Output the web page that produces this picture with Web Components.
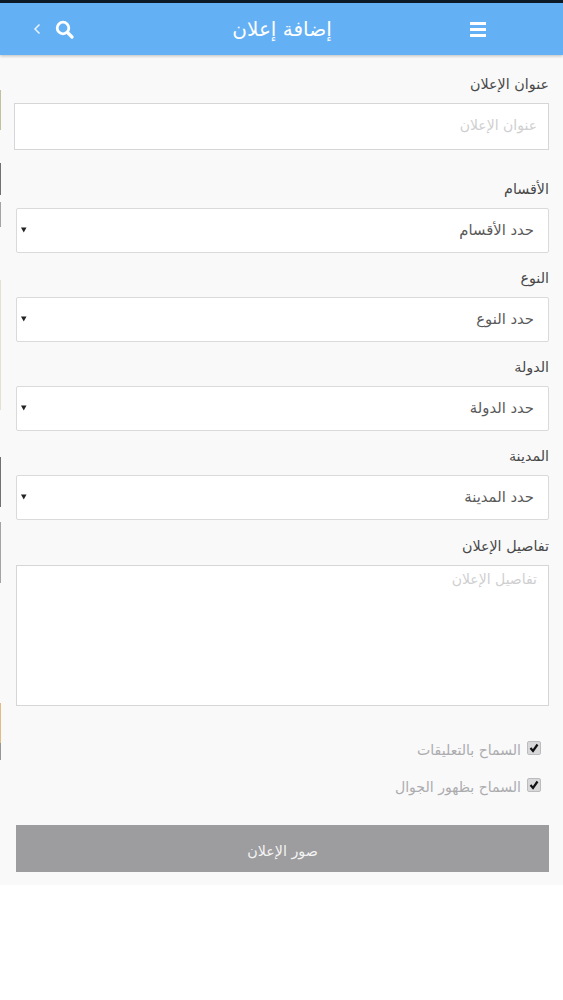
<!DOCTYPE html>
<html lang="ar" dir="rtl"><head><meta charset="utf-8">
<style>
html,body{margin:0;padding:0;background:#fff}
body{font-family:"DejaVu Sans","Noto Sans",sans-serif;width:563px}
</style></head><body>
<app-header title-text="إضافة إعلان"></app-header>
<form-page>
  <form-field label="عنوان الإعلان"><text-box placeholder="عنوان الإعلان"></text-box></form-field>
  <form-field label="الأقسام" style="--mt:29px"><select-box value="حدد الأقسام"></select-box></form-field>
  <form-field label="النوع"><select-box value="حدد النوع"></select-box></form-field>
  <form-field label="الدولة"><select-box value="حدد الدولة"></select-box></form-field>
  <form-field label="المدينة"><select-box value="حدد المدينة"></select-box></form-field>
  <form-field label="تفاصيل الإعلان" style="--mt:16px"><area-box placeholder="تفاصيل الإعلان"></area-box></form-field>
  <check-row label="السماح بالتعليقات" style="margin-top:34px"></check-row>
  <check-row label="السماح بظهور الجوال" style="margin-top:17px"></check-row>
  <gray-button style="margin-top:28px">صور الإعلان</gray-button>
</form-page>
<script>
function def(name, css, html){
  customElements.define(name, class extends HTMLElement{
    connectedCallback(){
      if(this.shadowRoot) return;
      const r=this.attachShadow({mode:'open'});
      r.innerHTML='<style>'+css+'</style>'+(typeof html==='function'?html(this):html);
    }
  });
}
def('app-header',`
  :host{display:block;box-sizing:border-box;height:55px;border-top:3px solid #0b1a26;background:#64b0f5;color:#fff;box-shadow:0 1px 3px rgba(0,0,0,.25);position:relative;z-index:1}
  .bar{direction:ltr;display:flex;align-items:center;height:100%;padding:0 77px 0 33px}
  .l{display:flex;align-items:center;gap:14px;width:61px}
  h1{flex:1;margin:0;text-align:center;font-weight:400;font-size:20px;direction:rtl}
  svg{display:block}
`,h=>`<div class="bar">
  <div class="l">
    <svg width="8" height="12" viewBox="0 0 8 12"><path d="M6.5 1.5 2 6l4.500 4.500" fill="none" stroke="#e8f3fd" stroke-width="1.500"/></svg>
    <svg width="19" height="19" viewBox="0 0 19 19"><circle cx="8" cy="8" r="5.800" fill="none" stroke="#fff" stroke-width="2.800"/><path d="M12.500 12.500 17 17" stroke="#fff" stroke-width="3.200" stroke-linecap="round"/></svg>
  </div>
  <h1>${h.getAttribute('title-text')}</h1>
  <svg width="16" height="15" viewBox="0 0 16 15"><path d="M0 1.500h16M0 7.500h16M0 13.500h16" stroke="#fff" stroke-width="3"/></svg>
</div>`);
def('form-page',`
  :host{display:block;background:#f9f9fa;height:830px;box-sizing:border-box;padding:19px 14px 0 14px;position:relative}
  .edge{position:absolute;left:0;top:0;bottom:0;width:1px;opacity:.75;filter:blur(.4px);background:linear-gradient(transparent 0 35px,#b0ad80 35px 75px,transparent 75px 108px,#444 108px 140px,transparent 140px 147px,#888 147px 172px,transparent 172px 225px,#dcd9c8 225px 355px,transparent 355px 402px,#444 402px 452px,transparent 452px 467px,#888 467px 528px,transparent 528px 648px,#d9a860 648px 688px,#777 688px 705px,transparent 705px)}
`,`<div class="edge"></div><slot></slot>`);
def('form-field',`
  :host{display:block;margin-top:var(--mt,15px)}
  :host(:first-child){margin-top:0}
  .lab{font-size:14.300px;line-height:21px;color:#484848;margin-bottom:8px;text-align:right}
`,h=>`<div class="lab">${h.getAttribute('label')}</div><slot></slot>`);
def('text-box',`
  :host{display:block;height:47px;box-sizing:border-box;background:#fff;border:1px solid #d6d6d8;padding:0 11px;font-size:14px;line-height:43px;color:#cfcfd1;text-align:right}
`,h=>`${h.getAttribute('placeholder')}`);
def('select-box',`
  :host{display:flex;align-items:center;justify-content:space-between;height:45px;box-sizing:border-box;margin-left:2px;background:#fff;border:1px solid #dadadc;border-radius:2px;padding:0 14px 2px 4px;font-size:14.800px;color:#5a5a5a}
  svg{display:block}
`,h=>`<span>${h.getAttribute('value')}</span><svg width="6" height="6" viewBox="0 0 6 6"><path d="M0 .5h5.500L2.750 5.500z" fill="#222"/></svg>`);
def('area-box',`
  :host{display:block;height:141px;box-sizing:border-box;margin-left:2px;background:#fff;border:1px solid #d6d6d8;padding:3px 11px;font-size:14px;line-height:21px;color:#cfcfd1;text-align:right}
`,h=>`${h.getAttribute('placeholder')}`);
def('check-row',`
  :host{display:flex;align-items:center;gap:6px;height:20px;padding-right:8px;font-size:14.100px;color:#acacae}
  svg{display:block;margin-top:-4px}
`,h=>`<svg width="14" height="14" viewBox="0 0 14 14"><rect x=".5" y=".5" width="13" height="13" rx="1.500" fill="#d8d8da" stroke="#bcbcbe"/><path d="M3.500 7 6 10 10.500 3.500" fill="none" stroke="#111" stroke-width="2.200"/></svg><span>${h.getAttribute('label')}</span>`);
def('gray-button',`
  :host{display:flex;align-items:center;justify-content:center;height:47px;box-sizing:border-box;padding-top:4px;margin-left:2px;background:#9d9c9e;color:#f4f4f4;font-size:14.300px}
`,`<slot></slot>`);
</script>
</body></html>
